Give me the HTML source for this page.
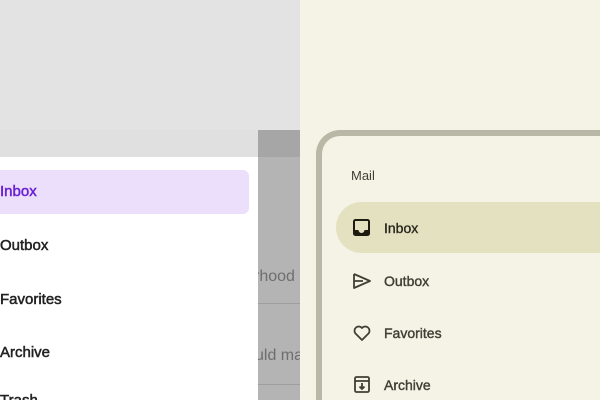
<!DOCTYPE html>
<html style="margin:0;width:600px;height:400px;overflow:hidden"><head><style>
body{margin:0;width:600px;height:400px;overflow:hidden;position:relative;font-family:"Liberation Sans",sans-serif;background:#f5f2e6}
.l{position:absolute;left:0;top:0;width:300px;height:400px;background:#e3e3e3;overflow:hidden}
.scrim{position:absolute;left:258px;top:130px;width:42px;height:270px;background:#b4b4b4}
.scrimtop{position:absolute;left:258px;top:130px;width:42px;height:27px;background:#a6a6a6}
.st{position:absolute;font-size:16px;color:#6e6e6e;white-space:nowrap}
.line{position:absolute;left:258px;width:42px;height:1px;background:#9e9e9e}
.panel{position:absolute;left:0;top:130px;width:258px;height:270px;background:#fff}
.pbar{position:absolute;left:0;top:130px;width:258px;height:27px;background:#e0e0e0}
.sel{position:absolute;left:-10px;top:170px;width:259px;height:44px;background:#ecdffc;border-radius:6px}
.li{position:absolute;left:0;font-size:15px;color:#222;-webkit-text-stroke:0.5px #222;white-space:nowrap}
.wrap{position:absolute;left:300px;top:0;width:300px;height:400px;overflow:hidden}
.frame{position:absolute;left:16px;top:130px;width:320px;height:264px;border:6px solid #b9b8a7;border-bottom:0;border-radius:24px 24px 0 0;background:#f5f2e6}
.pill{position:absolute;left:36px;top:202px;width:264px;height:51px;background:#e4e1c0;border-radius:26px 0 0 26px}
.ri{position:absolute;left:84px;font-size:14px;color:#3f3f35;-webkit-text-stroke:0.4px #3f3f35;white-space:nowrap}
svg{position:absolute}
</style></head><body>
<div class="l">
<div class="scrim"></div><div class="scrimtop"></div>
<div class="st" style="left:254px;top:268px">rhood</div>
<div class="line" style="top:303px"></div>
<div class="st" style="left:255px;top:347px">uld ma</div>
<div class="line" style="top:384px"></div>
<div class="panel"></div><div class="pbar"></div>
<div class="sel"></div>
<div class="li" style="top:183px;color:#6b21d4;-webkit-text-stroke-color:#6b21d4">Inbox</div>
<div class="li" style="top:237px">Outbox</div>
<div class="li" style="top:291px">Favorites</div>
<div class="li" style="top:344px">Archive</div>
<div class="li" style="top:392px;height:8px;overflow:hidden">Trash</div>
</div>
<div class="wrap">
<div class="frame"></div>
<div class="pill"></div>
<div class="ri" style="left:51px;top:168px;-webkit-text-stroke:0;font-size:13px">Mail</div>
<svg style="left:52px;top:218px" width="20" height="20" viewBox="0 0 20 20"><rect x="2" y="2" width="15" height="15" rx="1.5" fill="none" stroke="#1d1b10" stroke-width="2"/><path d="M2 12h4.5a3 3 0 0 0 6 0H17v5H2z" fill="#1d1b10"/></svg>
<div class="ri" style="top:220px;color:#1d1b10">Inbox</div>
<svg style="left:52px;top:271px" width="20" height="20" viewBox="0 0 20 20"><path d="M2 3 L18 10 L2 17 L2 3 M2 10 H11" fill="none" stroke="#3f3f35" stroke-width="1.8" stroke-linejoin="round"/></svg>
<div class="ri" style="top:273px">Outbox</div>
<svg style="left:52px;top:323px" width="20" height="20" viewBox="0 0 20 20"><path d="M10 17 L3.5 10.5 A4 4 0 0 1 10 5 A4 4 0 0 1 16.5 10.5 Z" fill="none" stroke="#3f3f35" stroke-width="1.8" stroke-linejoin="round"/></svg>
<div class="ri" style="top:325px">Favorites</div>
<svg style="left:52px;top:375px" width="20" height="20" viewBox="0 0 20 20"><rect x="3" y="2" width="14" height="15" rx="1.5" fill="none" stroke="#3f3f35" stroke-width="1.8"/><path d="M3 6h14M10 8v6M7.5 11.5 10 14l2.5-2.5" fill="none" stroke="#3f3f35" stroke-width="1.8"/></svg>
<div class="ri" style="top:377px">Archive</div>
</div>
</body></html>
